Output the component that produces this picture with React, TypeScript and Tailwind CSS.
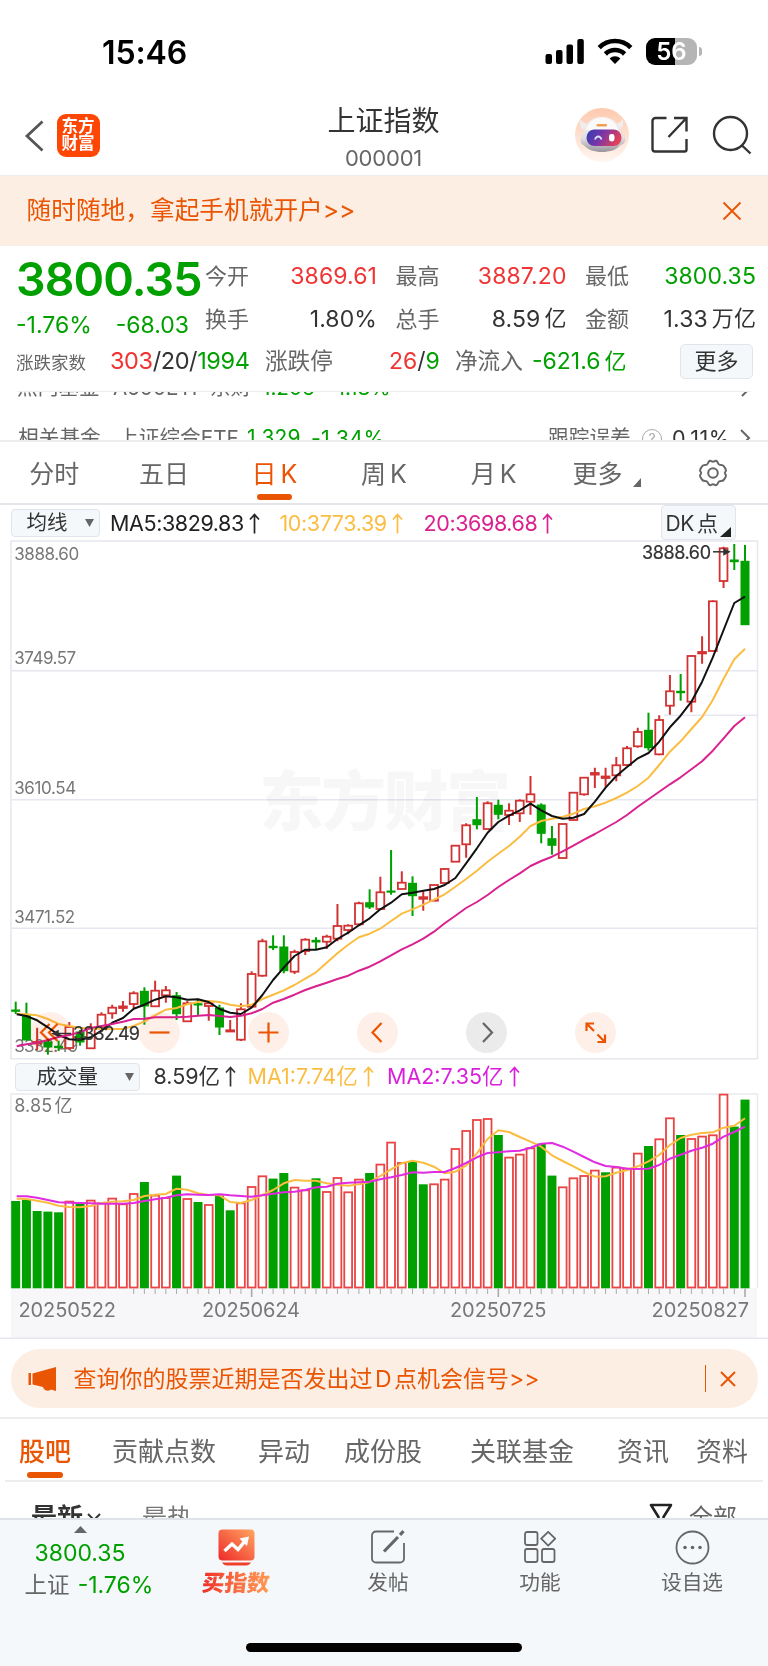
import type { ReactNode } from 'react';

const STEP = 10.725;
const FIRST_X = 15.7;

const xAt = (i: number) => FIRST_X + STEP * i;

// [direction, high, body top, body bottom, low]
type Candle = ['u' | 'd', number, number, number, number];

const candles: Candle[] = [
  ['d', 1001.7, 1010, 1011.3, 1014],
  ['d', 1002.7, 1015, 1040, 1040],
  ['u', 1027.7, 1042, 1043.5, 1050],
  ['d', 1040, 1042, 1047, 1054.7],
  ['d', 1040.7, 1046.3, 1047.6, 1051],
  ['u', 1022, 1027, 1048, 1050],
  ['d', 1030, 1032, 1042, 1045.7],
  ['u', 1023.3, 1027.7, 1048.3, 1048.3],
  ['u', 1012.3, 1014.7, 1027.3, 1027.3],
  ['u', 1004.7, 1007.7, 1013.3, 1018.7],
  ['u', 1001, 1006.4, 1008, 1011.7],
  ['u', 991.3, 993.3, 1004, 1008.3],
  ['d', 987.3, 991.3, 1006, 1024.7],
  ['u', 980.7, 990.7, 1006.3, 1006.3],
  ['u', 986, 990.3, 995.3, 1002.7],
  ['d', 992, 995.7, 1013.7, 1020],
  ['u', 1001, 1003.3, 1021.3, 1021.3],
  ['d', 998.7, 1003.7, 1005, 1015],
  ['u', 1001, 1003.3, 1006, 1020.7],
  ['d', 1004.7, 1008, 1027, 1035],
  ['u', 1020, 1030.3, 1031.5, 1032],
  ['u', 1003.3, 1009.3, 1039.7, 1041],
  ['u', 971.3, 974, 1006.7, 1006.7],
  ['u', 938.7, 941.3, 975.7, 976.7],
  ['d', 935.3, 946.3, 947.7, 950],
  ['d', 935.3, 947, 970.7, 973.3],
  ['u', 949.7, 952, 971.7, 974],
  ['u', 938.3, 939.7, 951, 955],
  ['d', 937.3, 940.3, 942, 949],
  ['u', 934.7, 936.7, 941.7, 949],
  ['u', 904, 926, 938.7, 941.3],
  ['u', 924.3, 925.7, 930, 934.3],
  ['u', 901.7, 903.3, 924.3, 924.3],
  ['d', 889.3, 902.7, 907, 909],
  ['u', 876.7, 892.3, 909, 910],
  ['d', 850, 891, 892.2, 894.7],
  ['u', 871.3, 882.7, 889, 889],
  ['d', 876.3, 883.3, 895.7, 916],
  ['u', 891.3, 897.2, 898.8, 910.7],
  ['u', 885, 885, 900.7, 900.7],
  ['u', 868, 869, 883, 883],
  ['u', 845.7, 845.7, 861.7, 861.7],
  ['u', 823.3, 825.3, 844.3, 857.7],
  ['d', 797, 819.7, 824.7, 829.3],
  ['u', 801.3, 803.3, 829, 829],
  ['d', 799.7, 805.3, 814.3, 819.3],
  ['u', 803.3, 810.7, 815, 825],
  ['u', 799.3, 800.7, 813.3, 822],
  ['u', 776, 794.3, 801.7, 814.7],
  ['d', 803.3, 805, 833.3, 843.3],
  ['d', 826, 838.7, 845.3, 854.7],
  ['u', 824, 824, 858, 858],
  ['u', 792.7, 792.7, 820, 820],
  ['u', 777.7, 777.7, 794.3, 795.7],
  ['u', 767.7, 773, 774.6, 788],
  ['u', 767.7, 776.5, 778, 786.7],
  ['u', 757, 765.3, 775.3, 781.3],
  ['u', 746, 748.3, 765, 765],
  ['u', 727.7, 732, 746.3, 747.7],
  ['d', 712.7, 730.3, 747.7, 750.7],
  ['u', 715.3, 720, 754.3, 755.3],
  ['u', 675, 691.3, 705.7, 714.7],
  ['d', 674, 691.3, 692.7, 700.7],
  ['u', 655, 656, 701.7, 712.3],
  ['u', 636.3, 652, 653.4, 663.7],
  ['u', 600.3, 601.3, 651, 651],
  ['u', 546.7, 548.3, 581, 588],
  ['d', 544, 560, 561.7, 570],
  ['d', 545, 561.3, 624.7, 624.7],
];

const ma5 = [
  1014.3, 1016, 1020.3, 1027.3, 1035, 1039.3, 1039.7, 1037.3, 1030.7, 1022.7,
  1018, 1008.7, 1004.7, 999.7, 996.3, 997.3, 999.7, 999.3, 1002, 1009, 1012.7,
  1014, 1007.7, 995, 980, 967.7, 956, 949.7, 949.7, 947.3, 939, 932.7, 925.3,
  918.3, 909.3, 902.7, 894.3, 892.7, 890.7, 889, 885, 878, 863.3, 848.3, 832.7,
  822, 815.7, 810.3, 803.7, 810.3, 816, 818.7, 817.7, 814, 801.7, 787.7, 776,
  767, 758.3, 753, 741.7, 727.3, 715.7, 701.7, 681.7, 657.3, 630, 603, 596.7,
];

const ma10 = [
  1013.7, 1014.3, 1015.3, 1019, 1024, 1026, 1027.7, 1028.7, 1028.7, 1029, 1029,
  1026, 1021.3, 1015.3, 1009.7, 1008, 1004.3, 1002, 1001, 1002, 1004.7, 1006.3,
  1004.7, 999, 994.7, 990.3, 985, 978.7, 972.3, 962.7, 953.3, 944.7, 937.3,
  933.7, 928.7, 921, 913.7, 909.3, 904.7, 899.7, 894.3, 886.7, 879, 870.7,
  861.7, 853.7, 846, 836.7, 826, 821, 818.7, 816.7, 813.7, 809, 806.3, 802.7,
  798, 792.7, 786, 777.7, 765, 751.7, 741.3, 729, 717, 700, 678.7, 659.3, 648.7,
];

const ma20 = [
  1046.3, 1044.3, 1042.7, 1040, 1037, 1035, 1032.3, 1028, 1026, 1024, 1021.7,
  1019, 1018.7, 1017.3, 1017.3, 1017.3, 1016.7, 1015.7, 1015, 1016, 1017,
  1015.7, 1013.3, 1009, 1002.7, 999, 994.7, 990, 986.3, 982.7, 979, 975.7,
  970.7, 966.7, 961.3, 955.3, 949.3, 944.3, 938.7, 931.7, 923.3, 915.7, 908,
  902, 895, 887, 880, 873.3, 866, 861, 856.7, 851.3, 845.7, 839.7, 834, 828,
  822, 815, 806.7, 799.3, 791.7, 784.3, 777.3, 769.3, 761.3, 750.7, 738.3, 726,
  717.3,
];

const volumes = [
  87.3, 88.7, 77.3, 76.7, 76, 86.7, 85, 87.7, 85, 89.7, 84, 94.3, 106.3, 92.7,
  90.3, 112.7, 89.3, 86.3, 83.3, 92.7, 78, 85, 101.3, 112, 109.7, 115.3, 100.7,
  98, 110, 96.3, 110.3, 96, 108.7, 115.3, 123.7, 145.7, 125.3, 126.3, 104, 104,
  108.7, 139.3, 157.3, 168.3, 169.3, 153.3, 130.7, 133.7, 140, 144.7, 112.7,
  101, 110, 112.3, 117.7, 116, 120.7, 119.7, 134.7, 142.3, 149, 170, 153.3,
  149.3, 151.7, 153, 193.7, 161.7, 188.7,
];

const downVolumes = [
  0, 1, 2, 3, 4, 6, 12, 15, 17, 19, 20, 24, 25, 28, 33, 37, 38, 45, 49, 50, 55,
  59, 62, 67, 68,
];

const volMa1 = [
  1198.7, 1199, 1200.7, 1202.7, 1205.7, 1207, 1207.3, 1206, 1203, 1201.7,
  1201.3, 1200, 1196, 1194.7, 1194, 1188.7, 1189.7, 1193.3, 1195, 1195.3, 1202,
  1203, 1200, 1195, 1190, 1183.3, 1180, 1180.7, 1180.7, 1183.3, 1184.7, 1185.7,
  1184.3, 1182, 1176, 1169.3, 1163.3, 1160.7, 1162.7, 1166.7, 1173.3, 1171.7,
  1165.7, 1153.3, 1139, 1130.3, 1132, 1137, 1141.7, 1146.7, 1155.3, 1161,
  1166.3, 1172, 1176.7, 1176.3, 1172.7, 1170.3, 1166.3, 1161.3, 1155, 1145,
  1138, 1134.7, 1133, 1132.3, 1127.7, 1125.7, 1118.3,
];

const volMa2 = [
  1196.3, 1196.3, 1197.7, 1200, 1202.3, 1202.7, 1203, 1203.3, 1203.7, 1203.7,
  1203.7, 1203, 1201, 1199.3, 1197.7, 1195.3, 1194.3, 1194.7, 1195, 1194.3,
  1195.3, 1196, 1196.7, 1195.3, 1193.7, 1192.3, 1191.7, 1190, 1187.3, 1186.7,
  1183.7, 1182.7, 1182.3, 1181.7, 1179.3, 1177.3, 1175, 1172.3, 1172.7, 1172,
  1172, 1168, 1163, 1157.3, 1153, 1152.3, 1151.3, 1150.7, 1147.7, 1143.7, 1143,
  1146.7, 1151.7, 1157, 1162.3, 1166, 1167, 1168.7, 1169, 1168.7, 1165, 1158.7,
  1154.7, 1150.7, 1147.7, 1143.7, 1136.7, 1132, 1126.7,
];

function Line({ data, color }: { data: number[]; color: string }) {
  const points = data
    .map((y, i) => `${(i === 0 ? xAt(0) + 1 : xAt(i)).toFixed(1)},${y}`)
    .join(' ');
  return (
    <polyline
      points={points}
      fill="none"
      stroke={color}
      strokeWidth="2"
      strokeLinejoin="round"
    />
  );
}

function StatusBar() {
  return (
    <div className="flex h-[94px] items-start pl-[102px]">
      <div className="mt-[34px] w-[90px] text-[32px] leading-[38px] font-semibold tracking-[-0.1px] text-black">
        15:46
      </div>
      <svg className="mt-[36px] ml-[353px]" width="40" height="30" viewBox="0 0 40 30">
        <rect x="0.5" y="18" width="6.5" height="10" rx="2" />
        <rect x="11" y="14" width="6.5" height="14" rx="2" />
        <rect x="21.5" y="8.5" width="6.5" height="19.5" rx="2" />
        <rect x="32.3" y="3" width="6.5" height="25" rx="2" />
      </svg>
      <svg className="mt-[36px] ml-[12px]" width="36" height="30" viewBox="0 0 36 30">
        <g fill="none" stroke="#000" strokeWidth="4.6">
          <path d="M2.2 11.6a22.3 22.3 0 0 1 31.6 0" />
          <path d="M8.4 18a13.6 13.6 0 0 1 19.2 0" />
        </g>
        <path d="M12.6 22.6a7.6 7.6 0 0 1 10.8 0L18 28z" />
      </svg>
      <div className="mt-[38px] ml-[13px] flex items-center">
        <div className="flex h-[27px] w-[51px] items-center justify-center rounded-[9px] bg-linear-to-r from-black from-[56%] to-[#b5b5b5] to-[56%] text-[24px] leading-none font-semibold text-white">
          56
        </div>
        <div className="ml-[1.5px] h-[9px] w-[3px] rounded-r-full bg-[#b5b5b5]" />
      </div>
    </div>
  );
}

function Robot() {
  return (
    <svg width="54" height="54" viewBox="0 0 54 54">
      <defs>
        <linearGradient id="halo" x1="0" y1="0" x2="0" y2="1">
          <stop offset="0" stopColor="#fdc9ad" />
          <stop offset="1" stopColor="#fff6f1" />
        </linearGradient>
        <linearGradient id="visor" x1="0" y1="0" x2="1" y2="0.3">
          <stop offset="0" stopColor="#2b3fb4" />
          <stop offset="0.5" stopColor="#7a35a8" />
          <stop offset="1" stopColor="#e0405a" />
        </linearGradient>
        <linearGradient id="shell" x1="0" y1="0" x2="0" y2="1">
          <stop offset="0" stopColor="#f6f3f4" />
          <stop offset="0.6" stopColor="#e2dfe3" />
          <stop offset="1" stopColor="#98949c" />
        </linearGradient>
      </defs>
      <circle cx="27" cy="27" r="27" fill="url(#halo)" />
      <path d="M5 11c-1 4 0 8 3 11l6-6c-4 0-7-2-9-5zM48 11c1 4 0 8-3 11l-6-6c4 0 7-2 9-5z" fill="#f1edef" />
      <path d="M27 9c11 0 17 7 19 16 3 1 4.500 3 4.500 6s-2 5.500-5 6c-4 5-11 7-18.500 7s-14-2-18.500-7c-2 0-3-3-3-6 0-3 1-5 2.500-6 2-9 8-16 19-16z" fill="url(#shell)" />
      <path d="M27 10c9 0 14 5 16.500 12h-33C13 15 18 10 27 10z" fill="#fbf9f9" />
      <rect x="21.500" y="16" width="10.500" height="2.6" rx="1.3" fill="#f0a052" />
      <rect x="11.500" y="21.500" width="35" height="16.500" rx="8" fill="url(#visor)" />
      <path d="M20 31.500c1.500-4 5-4 6.500 0" fill="none" stroke="#cfe2ff" strokeWidth="1.8" />
      <rect x="34" y="26" width="5.500" height="7.500" rx="2.400" fill="#fff" />
    </svg>
  );
}

function Header() {
  return (
    <header className="flex h-[82px] items-start border-b border-[#ececf0]">
      <svg className="mt-[26px] ml-[24px]" width="22" height="32" viewBox="0 0 22 32">
        <path d="M18.500 1.500L3 16l15.500 14.500" fill="none" stroke="#555" strokeWidth="2.800" />
      </svg>
      <div className="mt-[19.5px] ml-[10.5px] flex size-[43px] flex-col items-center justify-center rounded-[9px] bg-[#fe4605] text-[16.500px] leading-[17.5px] font-bold text-white">
        <span>东方</span>
        <span>财富</span>
      </div>
      <div className="mt-[7px] ml-[184px] flex w-[200px] flex-col items-center">
        <div className="text-[28px] leading-[40px] text-[#333]">上证指数</div>
        <div className="mt-[5px] text-[22px] leading-[24px] tracking-[-0.2px] text-[#666]">
          000001
        </div>
      </div>
      <div className="mt-[14px] ml-[91px]">
        <Robot />
      </div>
      <svg className="mt-[20px] ml-[20px]" width="40" height="40" viewBox="0 0 40 40">
        <g fill="none" stroke="#333" strokeWidth="2.400">
          <path d="M17.500 4H6.500a3 3 0 0 0-3 3v28a2.500 2.500 0 0 0 2.500 2.500h29.500a2 2 0 0 0 2-2V25" />
          <path d="M25 4h12.500v13.500M37 4.500L19.500 23" />
        </g>
      </svg>
      <svg className="mt-[21px] ml-[23px]" width="42" height="40" viewBox="0 0 42 40">
        <g fill="none" stroke="#333" strokeWidth="2.400">
          <circle cx="18.500" cy="18.500" r="16.500" />
          <path d="M30 30.500l8.500 8" />
        </g>
      </svg>
    </header>
  );
}

function Close() {
  return (
    <svg width="20" height="20" viewBox="0 0 20 20">
      <path d="M1.500 1.500l17 17M18.500 1.500l-17 17" stroke="#ea5504" strokeWidth="1.900" />
    </svg>
  );
}

function Stat({ label, children }: { label: string; children: ReactNode }) {
  return (
    <div className="flex items-center justify-between">
      <span className="text-[22px] text-[#666]">{label}</span>
      <span className="flex text-[23px] tracking-[0.1px]">{children}</span>
    </div>
  );
}

function Quote() {
  return (
    <section className="h-[145px] pt-[9px]">
      <div className="flex h-[86px]">
        <div className="w-[205px] shrink-0 pl-[16px] text-[#00a000]">
          <div className="text-[46.500px] leading-[48px] font-semibold tracking-[-0.9px]">3800.35</div>
          <div className="mt-[10px] flex justify-between pr-[16px] text-[23px] leading-[24px]">
            <span>-1.76%</span>
            <span>-68.03</span>
          </div>
        </div>
        <div className="grid w-[552px] grid-cols-[172px_171px_171px] grid-rows-[43px_43px] gap-x-[18.5px] text-[#333]">
          <Stat label="今开">
            <span className="text-[#f03434]">3869.61</span>
          </Stat>
          <Stat label="最高">
            <span className="text-[#f03434]">3887.20</span>
          </Stat>
          <Stat label="最低">
            <span className="text-[#00a000]">3800.35</span>
          </Stat>
          <Stat label="换手">1.80%</Stat>
          <Stat label="总手">
            8.59<span className="ml-[4px] text-[22px]">亿</span>
          </Stat>
          <Stat label="金额">
            1.33<span className="ml-[4px] text-[22px]">万亿</span>
          </Stat>
        </div>
      </div>
      <div className="flex h-[40px] items-center pl-[16px] text-[23px] text-[#666]">
        <span className="mt-[5px] w-[94px] shrink-0 text-[17.5px]">涨跌家数</span>
        <span className="w-[155px] shrink-0 text-[23.500px] tracking-[-0.4px] text-[#333]">
          <span className="text-[#f03434]">303</span>/20/<span className="text-[#00a000]">1994</span>
        </span>
        <span className="w-[124px] shrink-0 text-[22.6px]">涨跌停</span>
        <span className="w-[66px] shrink-0 text-[#333]">
          <span className="text-[#f03434]">26</span>/<span className="text-[#00a000]">9</span>
        </span>
        <span className="w-[77px] shrink-0 text-[22.6px]">净流入</span>
        <span className="w-[148px] shrink-0 text-[#00a000]">
          -621.6<span className="ml-[4px] text-[22px]">亿</span>
        </span>
        <span className="flex h-[35px] w-[73px] items-center justify-center rounded-[5px] border border-[#e1e4ea] bg-[#f5f8fa] text-[22px] text-[#333]">
          更多
        </span>
      </div>
    </section>
  );
}

function Funds() {
  return (
    <section className="h-[51px] overflow-hidden border-b-2 border-[#ededf0] text-[20.700px] leading-[28px] text-[#666]">
      <div className="mx-[17px] flex h-[6px] items-end overflow-hidden border-t border-[#ededf0]">
        <span className="mb-[-5px] w-[96px] shrink-0">热门基金</span>
        <span className="mb-[-5px] w-[149px] shrink-0">A500ETF 东财</span>
        <span className="mb-[-5px] w-[65px] shrink-0 text-[#00a000]">1.206</span>
        <span className="mb-[-5px] shrink-0 text-[#00a000]">-1.18%</span>
        <svg className="mr-[-1px] ml-auto shrink-0" width="11" height="18" viewBox="0 0 11 18">
          <path d="M1 1l8 8-8 8" fill="none" stroke="#666" strokeWidth="2" />
        </svg>
      </div>
      <div className="flex items-center pt-[27px] pl-[18px]">
        <span className="w-[100px] shrink-0">相关基金</span>
        <span className="w-[129px] shrink-0">上证综合ETF</span>
        <span className="w-[64px] shrink-0 text-[21px] tracking-[0.2px] text-[#00a000]">1.329</span>
        <span className="w-[237px] shrink-0 text-[21.500px] tracking-[0.2px] text-[#00a000]">-1.34%</span>
        <span className="w-[94px] shrink-0">跟踪误差</span>
        <span className="mt-[1px] flex size-[20px] shrink-0 items-center justify-center rounded-full border-[1.500px] border-[#aaa] text-[14px] leading-none text-[#aaa]">
          ?
        </span>
        <span className="ml-[10px] w-[68px] shrink-0 text-[21.500px] tracking-[0.5px] text-[#333]">0.11%</span>
        <svg width="11" height="18" viewBox="0 0 11 18">
          <path d="M1 1l8 8-8 8" fill="none" stroke="#666" strokeWidth="2" />
        </svg>
      </div>
    </section>
  );
}

function PeriodTabs() {
  return (
    <nav className="grid h-[63px] grid-cols-7 border-b-2 border-[#e3e5ea] text-[25px] leading-[36px] text-[#666]">
      <span className="pt-[14px] pr-[1px] text-center">分时</span>
      <span className="pt-[14px] pr-[1px] text-center">五日</span>
      <span className="flex flex-col items-center pt-[14px] text-[#ea5504]">
        <span className="flex gap-[4px]">
          日<span>K</span>
        </span>
        <i className="mt-[2px] h-[6px] w-[35px] rounded-full bg-[#ea5504]" />
      </span>
      <span className="flex justify-center gap-[4px] pt-[14px]">
        周<span>K</span>
      </span>
      <span className="flex justify-center gap-[4px] pt-[14px]">
        月<span>K</span>
      </span>
      <span className="flex items-start pt-[14px] pl-[24px]">
        更多
        <svg className="mt-[22px] ml-[10px]" width="8" height="9" viewBox="0 0 8 9">
          <path d="M8 0v9H0z" fill="#666" />
        </svg>
      </span>
      <span className="flex justify-center pt-[17px]">
        <svg width="30" height="28" viewBox="0 0 30 28" fill="none" stroke="#666" strokeWidth="2">
          <path d="M10.600 3Q11.800 1 13.300 2.200Q15 3.200 16.700 2.200Q18.200 1 19.400 3L20.300 4.600Q21 6 23 6Q25.400 5.900 26.400 8L27.700 10.300Q28.500 12 27.200 13Q26.500 14 27.200 15Q28.500 16 27.700 17.700L26.400 20Q25.400 22.100 23 22Q21 22 20.300 23.400L19.400 25Q18.200 27 16.700 25.800Q15 24.800 13.300 25.800Q11.800 27 10.600 25L9.700 23.400Q9 22 7 22Q4.600 22.100 3.600 20L2.300 17.700Q1.500 16 2.800 15Q3.500 14 2.800 13Q1.500 12 2.300 10.300L3.600 8Q4.600 5.900 7 6Q9 6 9.700 4.600Z" />
          <circle cx="15" cy="14" r="4.800" />
        </svg>
      </span>
    </nav>
  );
}

function Caret() {
  return (
    <svg width="9" height="8" viewBox="0 0 9 8">
      <path d="M0 0h9L4.500 8z" fill="#666" />
    </svg>
  );
}

function UpArrow() {
  return (
    <svg className="ml-[5px] shrink-0" width="11" height="21" viewBox="0 0 11 21">
      <path d="M5.500 20.500V1.500M1 6.500l4.500-5 4.500 5" fill="none" stroke="currentColor" strokeWidth="1.700" />
    </svg>
  );
}

function AverageRow() {
  return (
    <div className="flex h-[35px] items-start pl-[10.5px] text-[21.500px] leading-[28px] tracking-[-0.4px]">
      <div className="mt-[4px] flex h-[28px] w-[89px] shrink-0 items-center justify-between rounded-[4px] border border-[#e1e4ea] bg-[#f5f8fa] pr-[5px] pl-[15px] text-[20.500px] tracking-normal text-[#333]">
        均线
        <Caret />
      </div>
      <div className="mt-[4px] ml-[10.5px] flex w-[169.5px] shrink-0 items-center text-[#222]">
        MA5:3829.83
        <UpArrow />
      </div>
      <div className="mt-[4px] flex w-[144px] shrink-0 items-center text-[#fbbd41]">
        10:3773.39
        <UpArrow />
      </div>
      <div className="mt-[4px] flex w-[237px] shrink-0 items-center text-[#d9218f]">
        20:3698.68
        <UpArrow />
      </div>
      <div className="flex h-[35px] w-[75px] shrink-0 items-end justify-between rounded-[4px] border border-[#e1e4ea] bg-[#f5f8fa] pr-[4px] pb-[2px] pl-[4px] text-[21px] text-[#333]">
        <span className="mb-[-1px] flex gap-[3px]">
          DK<span>点</span>
        </span>
        <svg className="-ml-[4px]" width="11" height="10" viewBox="0 0 11 10">
          <path d="M11 0v10H0z" fill="#222" />
        </svg>
      </div>
    </div>
  );
}

const axisLabels = [
  { text: '3888.60', y: 560.3, w: 65 },
  { text: '3749.57', y: 664.3, w: 62 },
  { text: '3610.54', y: 793.6, w: 62 },
  { text: '3471.52', y: 922.5, w: 61 },
  { text: '3332.49', y: 1052, w: 64 },
];

function PriceChart() {
  return (
    <div className="relative h-[521px]">
      <svg width="768" height="521" viewBox="0 540 768 521" className="block">
        <g stroke="#e6e8f0" strokeWidth="1.500" fill="none">
          <path d="M11 541H757.500V1058.700H11Z" />
          <path d="M11 670.700H757M11 799.700H757M11 928.300H757M664 715.300H757" />
        </g>
        <text x="259" y="825" fontSize="65" fontWeight="900" textLength="252" fill="#000" fillOpacity="0.032">
          东方财富
        </text>
        <g fontSize="17" fill="#777">
          {axisLabels.map((l) => (
            <text key={l.text} x="14.200" y={l.y} textLength={l.w}>
              {l.text}
            </text>
          ))}
        </g>
        {candles.map(([dir, high, top, bottom, low], i) => {
          const x = xAt(i);
          if (dir === 'd') {
            return (
              <g key={i}>
                <path d={`M${x} ${high}V${low}`} stroke="#00a000" strokeWidth="2" />
                <rect x={x - 4.500} y={top - 0.500} width="9" height={bottom - top + 1} fill="#00a000" />
              </g>
            );
          }
          const flat = bottom - top < 2;
          return (
            <g key={i} stroke="#d23232" strokeWidth="1.800">
              <path d={`M${x} ${high}V${top}M${x} ${bottom}V${low}`} strokeWidth="2" />
              <rect x={x - 3.900} y={top} width="7.800" height={bottom - top} fill={flat ? '#d23232' : '#fff'} />
            </g>
          );
        })}
        <Line data={ma10} color="#fbbd41" />
        <Line data={ma5} color="#111" />
        <Line data={ma20} color="#d9218f" />
        <g fontSize="18" fill="#333" stroke="#333" strokeWidth="0.200">
          <text x="642" y="558.600" textLength="69">
            3888.60
          </text>
          <text x="73" y="1040" textLength="67">
            3332.49
          </text>
        </g>
        <g stroke="#333" strokeWidth="1.500" fill="#333">
          <path d="M713 551.800H726" />
          <path d="M724 549.200L729 551.800L724 554.400Z" />
          <path d="M58 1033.500H71" />
          <path d="M58 1031L53 1033.500L58 1036Z" />
        </g>
      </svg>
      <div className="absolute bottom-[8.5px] left-[30px] flex gap-[68px] text-[#ea5504] mix-blend-multiply">
        <Control tone="bg-[#fef0e8]">
          <path d="M19.500 12l-8.500 8.500 8.500 8.500M27.500 12L19 20.500l8.500 8.500" />
        </Control>
        <Control tone="bg-[#fef0e8]">
          <path d="M10.500 20.500h20" />
        </Control>
        <Control tone="bg-[#fef0e8]">
          <path d="M10.500 20.500h20M20.500 10.500v20" />
        </Control>
        <Control tone="bg-[#fef0e8]">
          <path d="M24.500 11l-9 9.500 9 9.500" />
        </Control>
        <Control tone="bg-[#ebebeb] text-[#666]">
          <path d="M17 11l9 9.500-9 9.500" />
        </Control>
        <Control tone="bg-[#fef0e8]">
          <path d="M19 11.500h-7.500v7.500M12 12l7 7M30 22.500v7.500h-7.500M29.500 29.500l-7-7" />
        </Control>
      </div>
    </div>
  );
}

function Control({ tone, children }: { tone: string; children: ReactNode }) {
  return (
    <div className={`size-[41px] rounded-full ${tone}`}>
      <svg width="41" height="41" viewBox="0 0 41 41" fill="none" stroke="currentColor" strokeWidth="2.200">
        {children}
      </svg>
    </div>
  );
}

function VolumeRow() {
  return (
    <div className="flex h-[32px] items-start pl-[14.5px] text-[21.500px] leading-[28px]">
      <div className="mt-[2px] flex h-[28px] w-[125px] shrink-0 items-center justify-between rounded-[4px] border border-[#e1e4ea] bg-[#f5f8fa] pr-[5px] pl-[21px] text-[20.500px] text-[#333]">
        成交量
        <Caret />
      </div>
      <div className="mt-[1px] ml-[14px] flex w-[94px] shrink-0 items-center text-[#333]">
        8.59亿
        <UpArrow />
      </div>
      <div className="mt-[1px] flex w-[139.5px] shrink-0 items-center text-[#fbbd41]">
        MA1:7.74亿
        <UpArrow />
      </div>
      <div className="mt-[1px] flex items-center text-[#da1fdc]">
        MA2:7.35亿
        <UpArrow />
      </div>
    </div>
  );
}

function VolumeChart() {
  return (
    <svg width="768" height="246" viewBox="0 1093 768 246" className="block">
      <rect x="11" y="1288" width="746" height="50" fill="#f7f7fa" />
      <path d="M11 1288V1094H757.500V1288" fill="none" stroke="#e9eaf0" strokeWidth="1.500" />
      <path d="M0 1338.300H768" stroke="#e6e8ee" strokeWidth="1.500" />
      <g fontSize="18" fill="#777">
        <text x="14.200" y="1111.500" textLength="38">8.85</text>
        <text x="54.500" y="1111.500">亿</text>
      </g>
      {volumes.map((h, i) => {
        const x = xAt(i);
        return downVolumes.includes(i) ? (
          <rect key={i} x={x - 4.500} y={1288.300 - h} width="9" height={h} fill="#00a000" />
        ) : (
          <rect key={i} x={x - 3.900} y={1288.300 - h} width="7.800" height={h - 0.800} fill="#fff" stroke="#ea4444" strokeWidth="1.800" />
        );
      })}
      <Line data={volMa1} color="#fbbd41" />
      <Line data={volMa2} color="#e02be0" />
      {volumes.map((_, i) => {
        const major = i === 22 || i === 45 || i === 68;
        return i < 11 ? null : (
          <path key={i} d={`M${xAt(i)} 1288.500V${major ? 1297 : 1294}`} stroke="#aaa" strokeWidth={major ? 1.6 : 1} />
        );
      })}
      <g fontSize="20" fill="#777">
        <text x="18.500" y="1316.500" textLength="97.500">20250522</text>
        <text x="202" y="1316.500" textLength="98">20250624</text>
        <text x="450" y="1316.500" textLength="96.500">20250725</text>
        <text x="651.500" y="1316.500" textLength="97.500">20250827</text>
      </g>
    </svg>
  );
}

function SignalBanner() {
  return (
    <div className="h-[80px] border-b-2 border-[#ededf0] px-[10.500px] pt-[10px]">
      <div className="flex h-[59px] items-center rounded-[29px] bg-[#fdeee4] text-[#ea5504]">
        <svg className="ml-[17px] shrink-0" width="30" height="26" viewBox="0 0 30 26" fill="#ea5504">
          <path d="M0.500 7h2.500v12H0.500zM4.500 7.500L28 1v24l-5-1.500c-2 2-7 1.500-8-2.500L4.500 18.500z" />
        </svg>
        <span className="ml-[16px] w-[591px] shrink-0 text-[23px] leading-[32px] whitespace-nowrap">
          查询你的股票近期是否发出过<span className="px-[2.500px]">D</span>点机会信号&gt;&gt;
        </span>
        <i className="mr-[14px] ml-[40px] h-[27px] w-[1.500px] bg-[#ea5504]" />
        <svg width="16" height="16" viewBox="0 0 16 16">
          <path d="M1 1l14 14M15 1L1 15" stroke="#ea5504" strokeWidth="2" />
        </svg>
      </div>
    </div>
  );
}

function ForumTabs() {
  return (
    <nav className="px-[5px]">
      <div className="flex h-[63px] items-start border-b-2 border-[#ededf0] pt-[15px] pl-[14px] text-[26px] leading-[36px] whitespace-nowrap text-[#666]">
        <span className="flex flex-col items-center text-[#ea5504]">
          <span className="font-medium">股吧</span>
          <i className="mt-[2px] h-[6px] w-[36px] rounded-full bg-[#ea5504]" />
        </span>
        <span className="ml-[41px]">贡献点数</span>
        <span className="ml-[42px]">异动</span>
        <span className="ml-[34px]">成份股</span>
        <span className="ml-[48px]">关联基金</span>
        <span className="ml-[43px]">资讯</span>
        <span className="ml-[27px]">资料</span>
      </div>
    </nav>
  );
}

function FeedFilter() {
  return (
    <div className="flex h-[36px] items-start overflow-hidden pt-[17px] pl-[31px] whitespace-nowrap">
      <span className="text-[26px] leading-[38px] font-bold text-[#333]">最新</span>
      <svg className="mt-[14px] ml-[4px] shrink-0" width="14" height="10" viewBox="0 0 14 10">
        <path d="M1 1l6 6 6-6" fill="none" stroke="#333" strokeWidth="2" />
      </svg>
      <span className="ml-[41px] w-[507px] shrink-0 text-[25px] leading-[38px] text-[#777]">最热</span>
      <svg className="mt-[4px] shrink-0" width="24" height="26" viewBox="0 0 24 26">
        <path d="M2 2h20l-7.500 12v10l-5-3v-7z" fill="none" stroke="#222" strokeWidth="2.600" strokeLinejoin="round" />
      </svg>
      <span className="ml-[16px] text-[24px] leading-[38px] text-[#666]">全部</span>
    </div>
  );
}

function NavItem({ label, icon }: { label: ReactNode; icon: ReactNode }) {
  return (
    <div className="flex flex-1 flex-col items-center pt-[8px]">
      <div className="flex h-[38px] items-center">{icon}</div>
      <div className="mt-[3px] text-[20.700px] leading-[28px] text-[#666]">{label}</div>
    </div>
  );
}

function BottomBar() {
  return (
    <footer className="flex h-[149px] flex-col items-center border-t-2 border-[#dfe3e8] bg-[#f5f8fa]">
      <div className="flex h-[123px] w-full">
        <div className="flex w-[160px] flex-col items-center pt-[6px] text-[23px] leading-[28px] text-[#00a000]">
          <svg width="13" height="7" viewBox="0 0 13 7">
            <path d="M6.500 0L13 7H0z" fill="#666" />
          </svg>
          <span className="mt-[6px]">3800.35</span>
          <span className="mt-[4px] ml-[18px]">
            <span className="mr-[8px] text-[22.500px] text-[#666]">上证</span>-1.76%
          </span>
        </div>
        <NavItem
          icon={
            <svg width="37" height="37" viewBox="0 0 37 37">
              <defs>
                <linearGradient id="buy" x1="0" y1="1" x2="1" y2="0">
                  <stop offset="0" stopColor="#ee2a2a" />
                  <stop offset="1" stopColor="#ffa560" />
                </linearGradient>
              </defs>
              <rect x="0.500" y="0.500" width="36" height="31" rx="4" fill="url(#buy)" />
              <path d="M4 33.500h29c-1 2-3 3-5 3H9c-2 0-4-1-5-3z" fill="#f0402c" />
              <path d="M6.500 22l7.500-7 6 5.500 7-8.500" fill="none" stroke="#fff" strokeWidth="3.400" />
              <path d="M21.500 9.500l9.500-2-2 9.500z" fill="#fff" />
            </svg>
          }
          label={
            <span className="inline-block -skew-x-6 bg-linear-to-r from-[#ee2a2a] to-[#ff9a55] bg-clip-text text-[22.500px] font-black text-transparent">
              买指数
            </span>
          }
        />
        <NavItem
          icon={
            <svg width="35" height="34" viewBox="0 0 35 34" fill="none" stroke="#666" strokeWidth="1.800">
              <path d="M23 1.500H5a4 4 0 0 0-4 4v23a4 4 0 0 0 4 4h24a4 4 0 0 0 4-4V13" />
              <path d="M13 21.500L27 7M29 4.800L32.500 1.200" strokeWidth="3.200" />
            </svg>
          }
          label="发帖"
        />
        <NavItem
          icon={
            <svg width="32" height="32" viewBox="0 0 32 32" fill="none" stroke="#666" strokeWidth="1.800">
              <rect x="1" y="1" width="12.500" height="13" rx="2" />
              <rect x="1" y="18" width="12.500" height="13" rx="2" />
              <rect x="18" y="18" width="12.500" height="13" rx="2" />
              <path d="M24.200 0.800l7 6.900-7 6.900-7-6.900z" strokeLinejoin="round" />
            </svg>
          }
          label="功能"
        />
        <NavItem
          icon={
            <svg width="35" height="35" viewBox="0 0 35 35">
              <circle cx="17.500" cy="17.500" r="16" fill="none" stroke="#666" strokeWidth="1.800" />
              <g fill="#666">
                <circle cx="10" cy="17.500" r="1.800" />
                <circle cx="17.500" cy="17.500" r="1.800" />
                <circle cx="25" cy="17.500" r="1.800" />
              </g>
            </svg>
          }
          label="设自选"
        />
      </div>
      <div className="h-[9px] w-[276px] rounded-full bg-black" />
    </footer>
  );
}

export default function App() {
  return (
    <main className="h-[1666px] w-[768px] overflow-hidden bg-white font-['Inter','Noto_Sans_CJK_SC',sans-serif]">
      <StatusBar />
      <Header />
      <div className="flex h-[70px] items-center justify-between bg-[#fdeee4] pr-[26px] pl-[26.5px] text-[24.700px] text-[#ea5504]">
        <span>随时随地，拿起手机就开户&gt;&gt;</span>
        <Close />
      </div>
      <Quote />
      <Funds />
      <PeriodTabs />
      <AverageRow />
      <PriceChart />
      <VolumeRow />
      <VolumeChart />
      <SignalBanner />
      <ForumTabs />
      <FeedFilter />
      <BottomBar />
    </main>
  );
}
